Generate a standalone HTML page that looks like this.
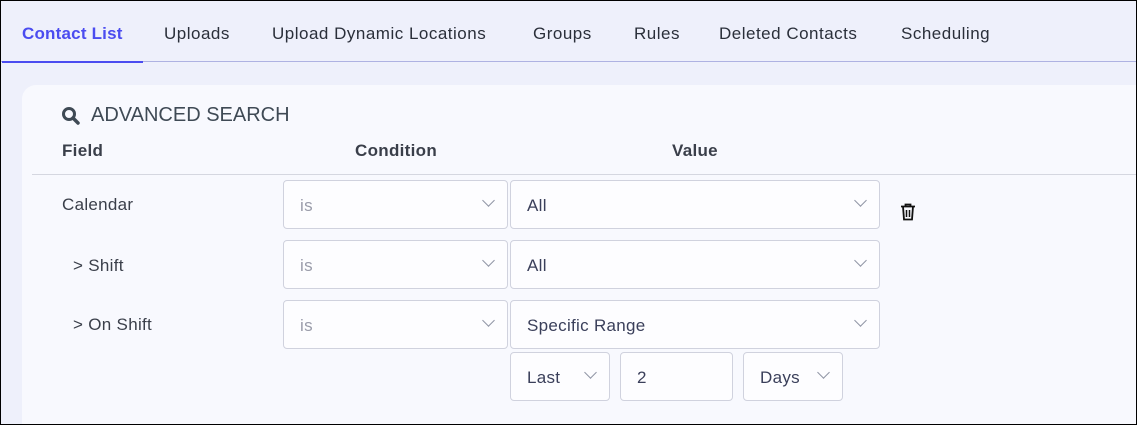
<!DOCTYPE html>
<html><head><style>
*{box-sizing:border-box;margin:0;padding:0}
html,body{width:1137px;height:425px;overflow:hidden}
body{font-family:"Liberation Sans",sans-serif;background:#eef0fb;position:relative}
.frame{position:absolute;left:0;top:0;width:1137px;height:425px;border:1px solid #000;z-index:10;pointer-events:none}
.tab{position:absolute;top:24px;font-size:17px;color:#2a2f3a;letter-spacing:0.5px}
.card{position:absolute;left:22px;top:85px;width:1130px;height:360px;background:#f8f9fe;border-radius:14px}
.abs{position:absolute}
.sel{position:absolute;height:49px;background:#fdfdff;border:1px solid #d0d2de;border-radius:4px;font-size:17px;color:#3a3f5a;padding:15px 0 0 16px;letter-spacing:0.3px}
.sel.g{color:#9a9caa}
.chev{position:absolute;right:14px;top:15px;width:9px;height:9px;border-right:1px solid #9095a5;border-bottom:1px solid #9095a5;transform:rotate(45deg)}
.lbl{position:absolute;font-size:17px;color:#3a3f4a;letter-spacing:0.3px}
.hd{position:absolute;top:141px;font-size:17px;font-weight:bold;color:#3a3f4a;letter-spacing:0.3px}
</style></head><body>
<div class="frame"></div>
<div class="tab" style="left:22px;color:#4b4cf0;font-weight:bold;letter-spacing:0.2px">Contact List</div>
<div class="tab" style="left:164px">Uploads</div>
<div class="tab" style="left:272px">Upload Dynamic Locations</div>
<div class="tab" style="left:533px">Groups</div>
<div class="tab" style="left:634px">Rules</div>
<div class="tab" style="left:719px">Deleted Contacts</div>
<div class="tab" style="left:901px">Scheduling</div>
<div class="abs" style="left:0;top:61px;width:1137px;height:1px;background:#aeb2e2"></div>
<div class="abs" style="left:2px;top:61px;width:141px;height:2px;background:#4b4cf0"></div>
<div class="card"></div>
<svg class="abs" style="left:61px;top:106px" width="20" height="20" viewBox="0 0 20 20"><circle cx="8" cy="8" r="5.5" fill="none" stroke="#3f4a55" stroke-width="3"/><line x1="12" y1="12" x2="17" y2="17" stroke="#3f4a55" stroke-width="3.5" stroke-linecap="round"/></svg>
<div class="abs" style="left:91px;top:104px;font-size:20px;color:#3f4a55">ADVANCED SEARCH</div>
<div class="hd" style="left:62px">Field</div>
<div class="hd" style="left:355px">Condition</div>
<div class="hd" style="left:672px">Value</div>
<div class="abs" style="left:32px;top:174px;width:1105px;height:1px;background:#d5d7e0"></div>
<div class="lbl" style="left:62px;top:195px">Calendar</div>
<div class="lbl" style="left:73px;top:256px">&gt; Shift</div>
<div class="lbl" style="left:73px;top:315px">&gt; On Shift</div>
<div class="sel g" style="left:283px;top:180px;width:225px">is<span class="chev"></span></div>
<div class="sel" style="left:510px;top:180px;width:370px">All<span class="chev"></span></div>
<div class="sel g" style="left:283px;top:240px;width:225px">is<span class="chev"></span></div>
<div class="sel" style="left:510px;top:240px;width:370px">All<span class="chev"></span></div>
<div class="sel g" style="left:283px;top:300px;width:225px">is<span class="chev"></span></div>
<div class="sel" style="left:510px;top:300px;width:370px">Specific Range<span class="chev"></span></div>
<div class="sel" style="left:510px;top:352px;width:100px">Last<span class="chev"></span></div>
<div class="sel" style="left:620px;top:352px;width:113px">2</div>
<div class="sel" style="left:743px;top:352px;width:100px">Days<span class="chev"></span></div>
<svg class="abs" style="left:900px;top:203px" width="16" height="18" viewBox="0 0 16 18"><path d="M1 3.5h14M5.5 3.5V1.5h5v2M3 3.5l1 13h8l1-13" fill="none" stroke="#111" stroke-width="1.8"/><path d="M6.5 7v7M9.5 7v7" stroke="#111" stroke-width="1.5"/></svg>
</body></html>
